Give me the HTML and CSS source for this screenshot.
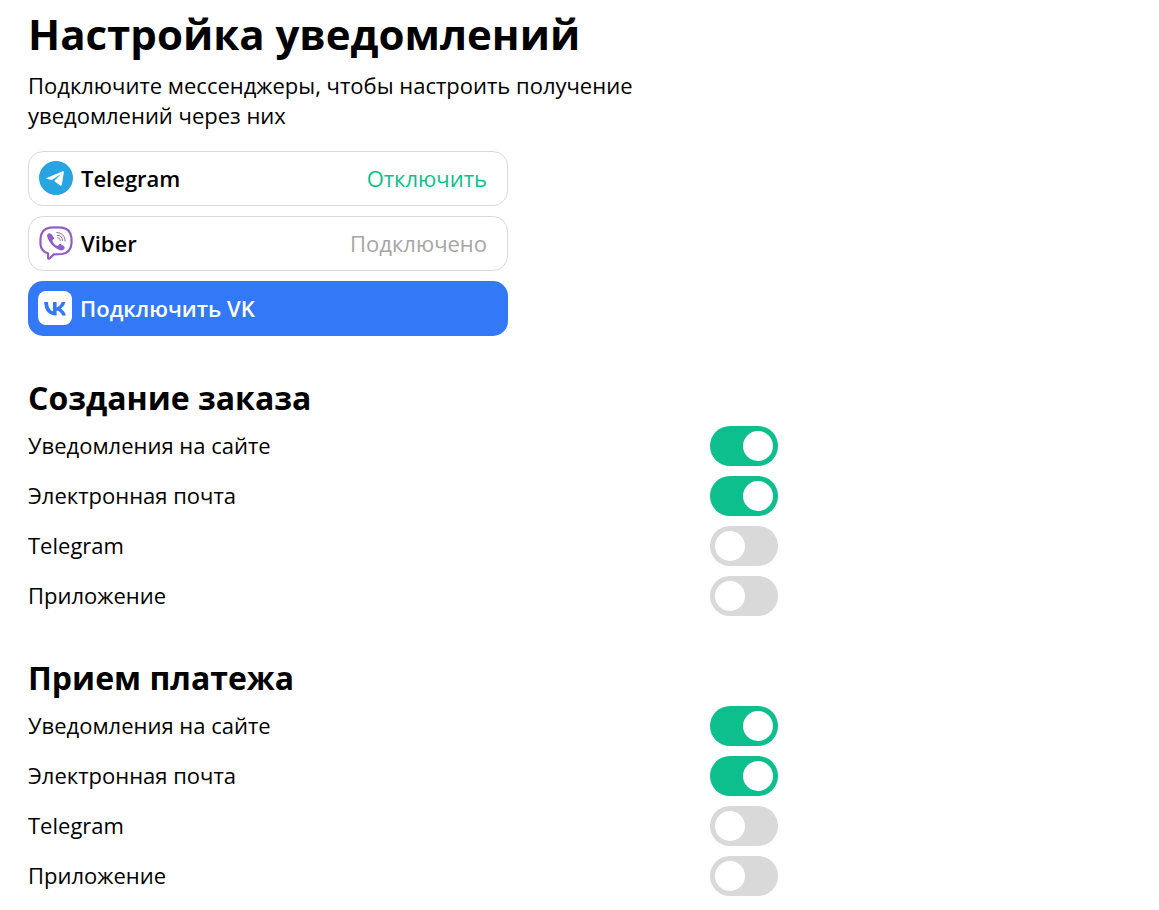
FILE: index.html
```html
<!DOCTYPE html>
<html lang="ru">
<head>
    <meta charset="UTF-8">
    <meta name="viewport" content="width=device-width, initial-scale=1.0">
    <title>Настройка уведомлений</title>
    <link rel="stylesheet" href="styles.css">
</head>
<body>
    <main class="settings">
        <h1>Настройка уведомлений</h1>
        <p class="intro">Подключите мессенджеры, чтобы настроить получение уведомлений через них</p>

        <div class="messengers">
            <div class="messenger">
                <svg class="messenger-icon" viewBox="0 0 34 34" aria-hidden="true">
                    <circle cx="17" cy="17" r="17" fill="#27a4e1"/>
                    <path d="M7.600 16.900 23.200 10.400C24.400 10 25 10.500 24.800 11.700L22.900 23.500C22.700 24.700 21.900 25 20.900 24.300L15.800 20.500C15.300 20.100 15.400 19.700 15.800 19.300L21.200 14C21.500 13.600 21.200 13.400 20.800 13.700L13.600 18.400C13 18.800 12.500 18.900 11.800 18.700L7.800 17.800C7 17.600 6.900 17.200 7.600 16.900Z" fill="#fff"/>
                </svg>
                <span class="messenger-name">Telegram</span>
                <button type="button" class="disconnect-btn">Отключить</button>
            </div>
            <div class="messenger">
                <svg class="messenger-icon" viewBox="0 0 34 34" fill="none" stroke="#8f5dcc" stroke-linecap="round" stroke-linejoin="round" aria-hidden="true">
                    <path d="M9 27.300C4.600 26 1.900 23 1.500 18.500V12.500C2 6 5 2.700 11 1.700Q17 .900 23 1.700C29 2.700 32 6 32.500 12V17.500C32 24 28.500 27.300 23 28L14.800 28.400 10.500 32.500Q9.300 33 9 32Z" stroke-width="2.200"/>
                    <path d="M10.300 7.200C8.500 7.600 7.600 9 8.300 11 10.300 17.200 15 22 22 24.500 23.800 24.800 25.800 23 25.700 21.500 25.500 20.300 22 18.100 20.900 18.100 19.900 18.200 19.500 19.900 18.500 19.900 16.400 19.500 14.100 17.300 13.400 14.700 13.400 13.500 15.200 13.500 15.200 12.100 15 11 12 7 10.300 7.200Z" fill="#8f5dcc" stroke="none"/>
                    <path d="M17.800 6.500C22.800 6.700 26 9.800 26.100 15M18.300 9.200C21.500 9.400 23.500 11.200 23.500 14.400M18.600 11.800C20.200 11.900 21 12.700 21.100 14.300" stroke-width="1"/>
                </svg>
                <span class="messenger-name">Viber</span>
                <span class="messenger-status">Подключено</span>
            </div>
            <button type="button" class="vk-btn">
                <svg class="messenger-icon" viewBox="0 0 34 34" aria-hidden="true">
                    <rect width="34" height="34" rx="8" fill="#fff"/>
                    <path d="M18.200 24.600C10.800 24.600 6.400 19.500 6.200 11.100H10C10.200 17.300 12.800 19.900 15 20.500V11.100H18.600V16.400C20.700 16.200 22.900 13.800 23.700 11.100H27.300C26.700 14.300 24.400 16.700 22.700 17.700 24.400 18.500 27 20.600 28 24.600H24.100C23.200 21.900 21.100 19.900 18.600 19.600V24.600Z" fill="#3278f7"/>
                </svg>
                <span>Подключить VK</span>
            </button>
        </div>

        <section class="event">
            <h2>Создание заказа</h2>
            <div class="option">
                <label for="orderSite">Уведомления на сайте</label>
                <input type="checkbox" id="orderSite" class="toggle" checked>
            </div>
            <div class="option">
                <label for="orderEmail">Электронная почта</label>
                <input type="checkbox" id="orderEmail" class="toggle" checked>
            </div>
            <div class="option">
                <label for="orderTelegram">Telegram</label>
                <input type="checkbox" id="orderTelegram" class="toggle">
            </div>
            <div class="option">
                <label for="orderApp">Приложение</label>
                <input type="checkbox" id="orderApp" class="toggle">
            </div>
        </section>

        <section class="event">
            <h2>Прием платежа</h2>
            <div class="option">
                <label for="paymentSite">Уведомления на сайте</label>
                <input type="checkbox" id="paymentSite" class="toggle" checked>
            </div>
            <div class="option">
                <label for="paymentEmail">Электронная почта</label>
                <input type="checkbox" id="paymentEmail" class="toggle" checked>
            </div>
            <div class="option">
                <label for="paymentTelegram">Telegram</label>
                <input type="checkbox" id="paymentTelegram" class="toggle">
            </div>
            <div class="option">
                <label for="paymentApp">Приложение</label>
                <input type="checkbox" id="paymentApp" class="toggle">
            </div>
        </section>
    </main>
</body>
</html>
```
FILE: styles.css
```css
* {
    box-sizing: border-box;
}
body {
    margin: 0;
    font-family: "Open Sans", "Noto Sans", sans-serif;
    font-size: 22px;
    line-height: 30px;
    background-color: #fff;
    color: #000;
}
h1, h2, p {
    margin: 0;
}
h1 {
    font-size: 42px;
    line-height: 60px;
}
h2 {
    font-size: 32px;
    line-height: 40px;
    margin-bottom: 8px;
}
button {
    font: inherit;
    border: none;
    cursor: pointer;
}
.settings {
    max-width: 806px;
    padding: 4px 28px 12px;
}
.intro {
    margin-top: 6px;
}
.messengers {
    display: flex;
    flex-direction: column;
    gap: 10px;
    max-width: 480px;
    margin-top: 21px;
}
.messenger, .vk-btn {
    display: flex;
    align-items: center;
    gap: 8px;
    height: 55px;
    border-radius: 15px;
}
.messenger {
    padding: 0 20px 2px 10px;
    border: 1px solid #d9d9d9;
}
.messenger-icon {
    flex: none;
    width: 34px;
    height: 34px;
}
.messenger-name {
    flex: 1;
    font-weight: 600;
}
.disconnect-btn {
    padding: 0;
    background: none;
    color: #0dbf8c;
}
.messenger-status {
    color: #a6a6a6;
}
.vk-btn {
    padding: 0 10px 2px;
    background-color: #3278f7;
    color: #fff;
    font-weight: 600;
}
.event {
    display: flex;
    flex-direction: column;
    margin-top: 42px;
}
.option {
    display: flex;
    align-items: center;
    justify-content: space-between;
    margin-bottom: 10px;
}
.option label {
    padding-bottom: 2px;
}
.event .option:last-child {
    margin-bottom: 0;
}
.toggle {
    appearance: none;
    flex: none;
    width: 68px;
    height: 40px;
    margin: 0;
    padding: 5px;
    border-radius: 20px;
    background-color: #d9d9d9;
    cursor: pointer;
}
.toggle::before {
    content: "";
    display: block;
    width: 30px;
    height: 30px;
    border-radius: 50%;
    background-color: #fff;
}
.toggle:checked {
    background-color: #0dbf8c;
}
.toggle:checked::before {
    margin-left: 28px;
}
```
